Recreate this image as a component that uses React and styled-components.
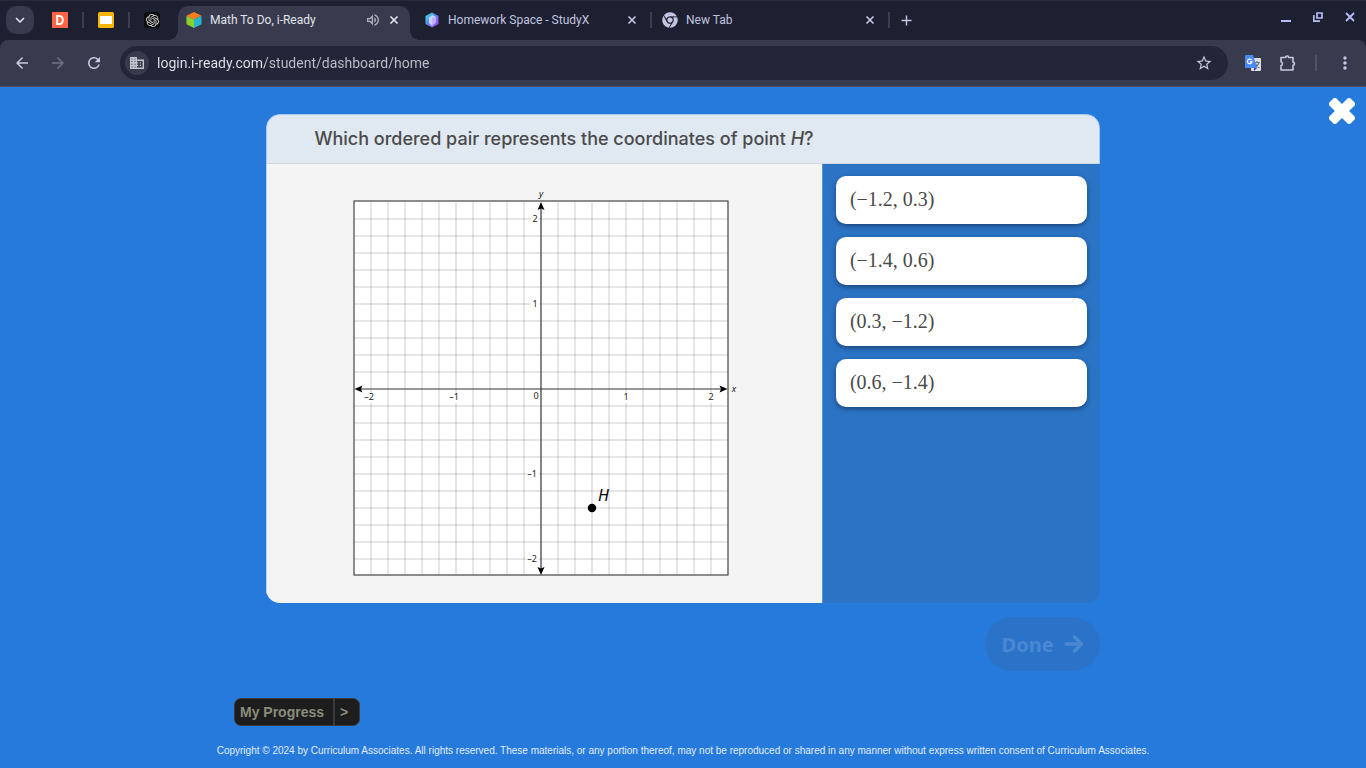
import React, { useState } from 'react';
import styled, { createGlobalStyle } from 'styled-components';
import {
  MdArrowBack, MdArrowForward, MdRefresh, MdStarBorder, MdMoreVert,
  MdOutlineVolumeUp, MdAdd, MdKeyboardArrowDown,
} from 'react-icons/md';
import { SiOpenai } from 'react-icons/si';
import { FaChrome } from 'react-icons/fa';

const answers = ['(−1.2, 0.3)', '(−1.4, 0.6)', '(0.3, −1.2)', '(0.6, −1.4)'];

function PinnedTabs() {
  return (
    <>
      <PinnedTab aria-label="D">
        <svg width="16" height="16" viewBox="0 0 16 16">
          <rect width="16" height="16" fill="#ff6444" />
          <path d="M5.2 4h2.6a3 4 0 0 1 0 8H5.2z" fill="none" stroke="#fff" strokeWidth="2" />
        </svg>
      </PinnedTab>
      <Separator />
      <PinnedTab aria-label="Slides">
        <svg width="16" height="16" viewBox="0 0 16 16">
          <rect width="16" height="16" rx="1.5" fill="#f7b400" />
          <rect x="2" y="4" width="12" height="8" fill="#fff" />
        </svg>
      </PinnedTab>
      <Separator />
      <PinnedTab aria-label="ChatGPT">
        <GptIcon><SiOpenai size={13} /></GptIcon>
      </PinnedTab>
    </>
  );
}

function CubeIcon() {
  return (
    <svg width="16" height="16" viewBox="0 0 16 16">
      <path d="M8 0l7.5 3.7L8 7.6.5 3.7z" fill="#ff7a1c" />
      <path d="M.5 3.7L8 7.6V16L.5 12.2z" fill="#8ccf2e" />
      <path d="M15.5 3.7L8 7.6V16l7.5-3.8z" fill="#1fb8cc" />
    </svg>
  );
}

function StudyIcon() {
  return (
    <svg width="16" height="16" viewBox="0 0 16 16">
      <defs>
        <linearGradient id="study" x1="0" y1="0" x2="1" y2="1">
          <stop offset="0" stopColor="#2df0c4" />
          <stop offset=".45" stopColor="#5a8cf8" />
          <stop offset="1" stopColor="#c03cf0" />
        </linearGradient>
      </defs>
      <path d="M8 .5l6.5 3.5v8L8 15.5 1.5 12V4z" fill="url(#study)" />
      <path d="M5 5.500L8.500 3 12 5v5l-4 4-3-3z" fill="#e6e4ff" opacity=".8" />
      <path d="M8 6v8l4-4V5z" fill="#b9a4fa" opacity=".7" />
    </svg>
  );
}

function CloseIcon() {
  return (
    <svg width="10" height="10" viewBox="0 0 10 10">
      <path d="M1.500 1.500l7 7M8.500 1.500l-7 7" stroke="currentColor" strokeWidth="1.700" />
    </svg>
  );
}

function SiteIcon() {
  return (
    <svg width="14" height="12" viewBox="0 0 14 12" fill="currentColor" fillRule="evenodd">
      <path d="M0 0h7v2.500h7V12H0zM1.500 1.500v1h1v-1zM4.500 1.500v1h1v-1zM1.500 4v1h1V4zM4.500 4v1h1V4zM1.500 6.800v1h1v-1zM4.500 6.800v1h1v-1zM1.500 9.500v1h1v-1zM4.500 9.500v1h1v-1zM7 4v1.200h1.200v1.300H7v1.200h1.200V9H7v1.600h5.600V4z" />
      <path d="M9.700 5.200H11v1.300H9.700zM9.700 7.700H11V9H9.700z" />
    </svg>
  );
}

function TranslateIcon() {
  return (
    <svg width="16" height="16" viewBox="0 0 16 16">
      <rect x="6" y="3" width="10" height="13" rx="1" fill="#dcdfe0" />
      <path d="M9 7.500h6M12 6v1.500M14 7.500c-.6 2.500-2 4-4 5.500M10.500 8.500c.8 2 2 3.500 4 4.500" fill="none" stroke="#62777f" strokeWidth="1.100" />
      <path d="M9 13h3l-3 3z" fill="#3a3fc8" />
      <path d="M1 0h7l4 13H1a1 1 0 0 1-1-1V1a1 1 0 0 1 1-1z" fill="#4a8af4" />
      <path d="M6.600 5a2.300 2.300 0 1 0 .4 1.700H4.900" fill="none" stroke="#fff" strokeWidth="1.200" />
    </svg>
  );
}

function PuzzleIcon() {
  return (
    <svg width="18" height="18" viewBox="0 0 18 18">
      <path d="M2 3.500h4.600a1.500 1.500 0 0 1 3 0H14v4.700a1.500 1.500 0 0 1 0 3V16H2v-4.200a2.200 2.200 0 0 0 0-4.100z" fill="none" stroke="#c6c8e4" strokeWidth="1.600" strokeLinejoin="round" />
    </svg>
  );
}

// 85px is one unit and 17px is one cell, the origin is at (188, 199)
function Graph() {
  const cells = [];
  for (let i = -10; i <= 10; i += 1) {
    if (i !== 0) cells.push(i * 17);
  }
  return (
    <GraphSvg viewBox="0 0 384 388" role="img" aria-label="Coordinate plane with point H">
      <rect x="1" y="11" width="374" height="374" fill="#fff" />
      {cells.map((c) => (
        <g key={c} stroke="#000" strokeOpacity=".2">
          <line x1={188 + c} x2={188 + c} y1="12" y2="385" />
          <line y1={199 + c} y2={199 + c} x1="1" x2="375" />
        </g>
      ))}
      <rect x="1" y="11" width="374" height="374" fill="none" stroke="#444" strokeWidth="1.200" />
      <g fill="#fff">
        <rect x="10" y="203" width="13" height="10" />
        <rect x="95" y="203" width="12" height="10" />
        <rect x="269" y="203" width="8" height="10" />
        <rect x="354" y="203" width="8" height="10" />
        <rect x="178" y="24" width="8" height="10" />
        <rect x="178" y="109" width="8" height="10" />
        <rect x="173" y="279" width="13" height="10" />
        <rect x="173" y="364" width="13" height="10" />
      </g>
      <g stroke="#333" strokeWidth="1.200">
        <line x1="4" x2="372" y1="199" y2="199" />
        <line x1="188" x2="188" y1="14" y2="382" />
      </g>
      <g fill="#000">
        <path d="M1.500 199l8-3.500-1.500 3.500 1.500 3.500z" />
        <path d="M374.500 199l-8-3.500 1.500 3.500-1.500 3.500z" />
        <path d="M188 12l-3.500 8 3.500-1.500 3.500 1.500z" />
        <path d="M188 385l-3.500-8 3.500 1.500 3.500-1.500z" />
        <circle cx="239" cy="318" r="4.200" />
      </g>
      <AxisText x="16" y="210">–2</AxisText>
      <AxisText x="101" y="210">–1</AxisText>
      <AxisText x="183" y="209">0</AxisText>
      <AxisText x="273" y="210">1</AxisText>
      <AxisText x="358" y="210">2</AxisText>
      <AxisText x="182" y="32">2</AxisText>
      <AxisText x="182" y="117">1</AxisText>
      <AxisText x="179" y="287">–1</AxisText>
      <AxisText x="179" y="372">–2</AxisText>
      <AxisText x="188" y="7" $italic>y</AxisText>
      <AxisText x="381" y="202" $italic>x</AxisText>
      <PointText x="245" y="311">H</PointText>
    </GraphSvg>
  );
}

function App() {
  const [url, setUrl] = useState('login.i-ready.com/student/dashboard/home');
  return (
    <>
      <GlobalStyle />
      <Window>
        <TabStrip>
          <TabSearch aria-label="Search tabs"><MdKeyboardArrowDown size={18} /></TabSearch>
          <PinnedTabs />
          <Tab $active>
            <CubeIcon />
            <TabTitle>Math To Do, i-Ready</TabTitle>
            <IconButton aria-label="Mute tab" $dim><MdOutlineVolumeUp size={16} /></IconButton>
            <IconButton aria-label="Close tab"><CloseIcon /></IconButton>
          </Tab>
          <Tab $wide>
            <StudyIcon />
            <TabTitle>Homework Space - StudyX</TabTitle>
            <IconButton aria-label="Close tab"><CloseIcon /></IconButton>
          </Tab>
          <Separator $tight />
          <Tab>
            <FaChrome size={16} />
            <TabTitle>New Tab</TabTitle>
            <IconButton aria-label="Close tab"><CloseIcon /></IconButton>
          </Tab>
          <Separator $tight />
          <NewTab aria-label="New tab"><MdAdd size={17} /></NewTab>
          <WindowControls>
            <IconButton aria-label="Minimize">
              <svg width="10" height="10" viewBox="0 0 10 10"><path d="M0 8h10v2H0z" fill="#b7bcf8" /></svg>
            </IconButton>
            <IconButton aria-label="Restore">
              <svg width="10" height="10" viewBox="0 0 10 10">
                <path d="M4 1h5v5H4zM.8 3v6.200H7" fill="none" stroke="#b7bcf8" strokeWidth="1.700" />
              </svg>
            </IconButton>
            <IconButton aria-label="Close">
              <svg width="10" height="10" viewBox="0 0 10 10"><path d="M1 1l8 8M9 1L1 9" stroke="#b7bcf8" strokeWidth="1.800" /></svg>
            </IconButton>
          </WindowControls>
        </TabStrip>
        <Toolbar>
          <NavButtons>
            <IconButton aria-label="Back"><MdArrowBack size={18} /></IconButton>
            <IconButton aria-label="Forward" $faded><MdArrowForward size={18} /></IconButton>
            <IconButton aria-label="Reload"><MdRefresh size={18} /></IconButton>
          </NavButtons>
          <AddressBar>
            <SiteInfo aria-label="Site information"><SiteIcon /></SiteInfo>
            <AddressInput aria-label="Address" value={url} onChange={(e) => setUrl(e.target.value)} />
            <IconButton aria-label="Bookmark"><MdStarBorder size={18} /></IconButton>
          </AddressBar>
          <Extensions>
            <IconButton aria-label="Translate"><TranslateIcon /></IconButton>
            <IconButton aria-label="Extensions"><PuzzleIcon /></IconButton>
            <Separator $tight $light />
            <IconButton aria-label="Menu"><MdMoreVert size={20} /></IconButton>
          </Extensions>
        </Toolbar>
        <Page>
          <CloseLesson aria-label="Close lesson">
            <svg width="26" height="26" viewBox="0 0 26 26" fill="#fff">
              <rect x="-2" y="8" width="30" height="10" rx="2.500" transform="rotate(45 13 13)" />
              <rect x="-2" y="8" width="30" height="10" rx="2.500" transform="rotate(-45 13 13)" />
            </svg>
          </CloseLesson>
          <Lesson>
            <Card>
              <Question>
                Which ordered pair represents the coordinates of point <em>H</em>?
              </Question>
              <Work>
                <GraphPane><Graph /></GraphPane>
                <Answers>
                  {answers.map((answer) => (
                    <Answer key={answer}>{answer}</Answer>
                  ))}
                </Answers>
              </Work>
            </Card>
            <Done disabled>
              Done
              <svg width="20" height="18" viewBox="0 0 20 18">
                <path d="M2 9h15.500M10.500 2L17.500 9l-7 7" fill="none" stroke="currentColor" strokeWidth="3.400" strokeLinecap="round" strokeLinejoin="round" />
              </svg>
            </Done>
          </Lesson>
          <Progress>
            <ProgressLabel>My Progress</ProgressLabel>
            <ProgressArrow>&gt;</ProgressArrow>
          </Progress>
          <Copyright>
            Copyright © 2024 by Curriculum Associates. All rights reserved. These materials, or any portion thereof, may not be reproduced or shared in any manner without express written consent of Curriculum Associates.
          </Copyright>
        </Page>
      </Window>
    </>
  );
}

const GlobalStyle = createGlobalStyle`
  * {
    box-sizing: border-box;
  }
  body {
    margin: 0;
    background: #267adb;
  }
  button {
    border: 0;
    padding: 0;
    background: none;
    color: inherit;
    font: inherit;
    cursor: pointer;
  }
  svg {
    display: block;
    flex-shrink: 0;
  }
`;
const Window = styled.div`
  display: flex;
  flex-direction: column;
  min-height: 100vh;
  background: #1d2030;
  font-family: Roboto, sans-serif;
`;
const TabStrip = styled.div`
  display: flex;
  align-items: center;
  height: 40px;
  padding: 0 11px 0 6px;
  box-shadow: inset 0 1px #282b3c;
  color: #c3c5e0;
`;
const TabSearch = styled.button`
  display: grid;
  place-items: center;
  width: 28px;
  height: 28px;
  margin-right: 10px;
  border-radius: 10px;
  background: #373b4d;
  color: #e8e8f0;
`;
const PinnedTab = styled.button`
  display: grid;
  place-items: center;
  width: 32px;
  height: 28px;
`;
const GptIcon = styled.span`
  display: grid;
  place-items: center;
  width: 16px;
  height: 16px;
  border-radius: 3px;
  background: #0c0c0e;
  color: #d8d8d8;
`;
const Separator = styled.span`
  width: 2px;
  height: 16px;
  margin: 0 ${({ $tight }) => ($tight ? '0' : '6px')};
  background: ${({ $light }) => ($light ? '#505468' : '#3b3e50')};
`;
const Tab = styled.div`
  position: relative;
  display: flex;
  align-items: center;
  gap: 8px;
  flex: 0 1 ${({ $active, $wide }) => ($active ? '232px' : ($wide && '240px') || '236px')};
  height: 34px;
  margin-left: ${({ $active }) => ($active ? '10px' : '0')};
  padding: ${({ $active, $wide }) => ($active ? '0 11px 6px 8px' : ($wide && '0 13px 0 14px') || '0 13px 0 10px')};
  align-self: ${({ $active }) => ($active ? 'flex-end' : 'center')};
  border-radius: 10px 10px 0 0;
  background: ${({ $active }) => ($active ? '#373b4d' : 'none')};
  color: ${({ $active }) => ($active ? '#e2e3ee' : '#c3c5e0')};
  &::before,
  &::after {
    content: '';
    display: ${({ $active }) => ($active ? 'block' : 'none')};
    position: absolute;
    bottom: 0;
    width: 10px;
    height: 10px;
  }
  &::before {
    left: -10px;
    background: radial-gradient(circle at 0 0, transparent 10px, #373b4d 10px);
  }
  &::after {
    right: -10px;
    background: radial-gradient(circle at 100% 0, transparent 10px, #373b4d 10px);
  }
`;
const TabTitle = styled.button`
  flex: 1;
  overflow: hidden;
  text-align: left;
  white-space: nowrap;
  font-size: 12px;
`;
const IconButton = styled.button`
  display: grid;
  place-items: center;
  opacity: ${({ $dim, $faded }) => ($faded ? 0.4 : ($dim && 0.7) || 1)};
  ${TabTitle} + & + & {
    margin-left: 3px;
  }
`;
const NewTab = styled.button`
  display: grid;
  place-items: center;
  width: 32px;
  height: 28px;
`;
const WindowControls = styled.div`
  display: flex;
  gap: 22px;
  margin-left: auto;
  padding-bottom: 6px;
`;
const Toolbar = styled.div`
  display: flex;
  align-items: center;
  gap: 17px;
  height: 47px;
  padding: 0 11px 0 13px;
  border-bottom: 1px solid #4b5062;
  border-radius: 8px 8px 0 0;
  background: #373b4d;
  color: #c6c8e4;
`;
const NavButtons = styled.div`
  display: flex;
  gap: 18px;
`;
const AddressBar = styled.div`
  display: flex;
  align-items: center;
  flex: 1;
  height: 34px;
  padding: 0 15px 0 5px;
  border-radius: 17px;
  background: #232639;
`;
const SiteInfo = styled.button`
  display: grid;
  place-items: center;
  width: 24px;
  height: 24px;
  border-radius: 50%;
  background: #373b4d;
  color: #c3c4cc;
`;
const AddressInput = styled.input`
  flex: 1;
  min-width: 0;
  margin-left: 8px;
  padding: 0;
  border: 0;
  outline: 0;
  background: linear-gradient(90deg, #e6e7ef 108px, #bfc1cc 108px);
  background-clip: text;
  color: transparent;
  caret-color: #e6e7ef;
  font-family: Roboto, sans-serif;
  font-size: 14px;
`;
const Extensions = styled.div`
  display: flex;
  align-items: center;
  gap: 18px;
`;
const Page = styled.main`
  position: relative;
  display: flex;
  flex: 1;
  flex-direction: column;
  align-items: center;
  padding: 27px 0 11px;
  background: #267adb;
`;
const CloseLesson = styled.button`
  position: absolute;
  top: 11px;
  right: 11px;
`;
const Lesson = styled.section`
  display: flex;
  flex-direction: column;
  width: 61%;
`;
const Card = styled.div`
  overflow: hidden;
  border-radius: 14px;
`;
const Question = styled.h1`
  margin: 0;
  padding: 0 47px;
  border: 1px solid #a9c9ee;
  border-bottom-color: #d5d8dd;
  border-radius: 14px 14px 0 0;
  background: #e0e8f2;
  color: #4a4a4a;
  font-family: Inter, sans-serif;
  font-size: 18px;
  font-weight: 500;
  line-height: 48px;
`;
const Work = styled.div`
  display: grid;
  grid-template-columns: 2fr 1fr;
`;
const GraphPane = styled.div`
  display: grid;
  place-items: start center;
  padding: 26px 0 25px;
  border-left: 1px solid #b9d3f2;
  background: #f4f4f4;
`;
const GraphSvg = styled.svg`
  width: 384px;
  height: 388px;
  overflow: visible;
`;
const AxisText = styled.text`
  fill: #222;
  font-family: 'Noto Sans', sans-serif;
  font-size: 9px;
  font-style: ${({ $italic }) => ($italic ? 'italic' : 'normal')};
  text-anchor: middle;
`;
const PointText = styled.text`
  font-family: 'Noto Sans', sans-serif;
  font-size: 16px;
  font-style: italic;
`;
const Answers = styled.div`
  display: flex;
  flex-direction: column;
  gap: 13px;
  padding: 12px 13px;
  border-left: 1px solid #5b93d4;
  background: #2b73c5;
`;
const Answer = styled.button`
  height: 48px;
  padding: 0 14px 2px;
  border-radius: 10px;
  background: #fff;
  box-shadow: 0 2px 5px rgba(0, 0, 0, 0.4);
  color: #4a4a4a;
  font-family: 'Liberation Serif', serif;
  font-size: 20px;
  text-align: left;
`;
const Done = styled.button`
  display: flex;
  align-items: center;
  align-self: flex-end;
  gap: 10px;
  height: 54px;
  margin-top: 14px;
  padding: 0 16px 0 17px;
  border-radius: 27px;
  background: #2b73c9;
  color: #4a88d3;
  font-family: 'Noto Sans', sans-serif;
  font-size: 20px;
  font-weight: 700;
`;
const Progress = styled.button`
  display: flex;
  align-self: flex-start;
  height: 28px;
  margin: 27px 0 0 234px;
  border: 1px solid #3a3a3a;
  border-radius: 7px;
  background: #1d1d1d;
  color: #8b8d7c;
  font-family: 'Liberation Sans', sans-serif;
  font-size: 14px;
  font-weight: 700;
  line-height: 26px;
`;
const ProgressLabel = styled.span`
  padding: 0 9px 0 5px;
  border-right: 2px solid #3a3a3a;
`;
const ProgressArrow = styled.span`
  padding: 0 11px 0 5px;
`;
const Copyright = styled.footer`
  margin-top: 19px;
  color: #e2edfa;
  font-family: 'Liberation Sans', sans-serif;
  font-size: 10px;
  line-height: 12px;
`;

export default App;
